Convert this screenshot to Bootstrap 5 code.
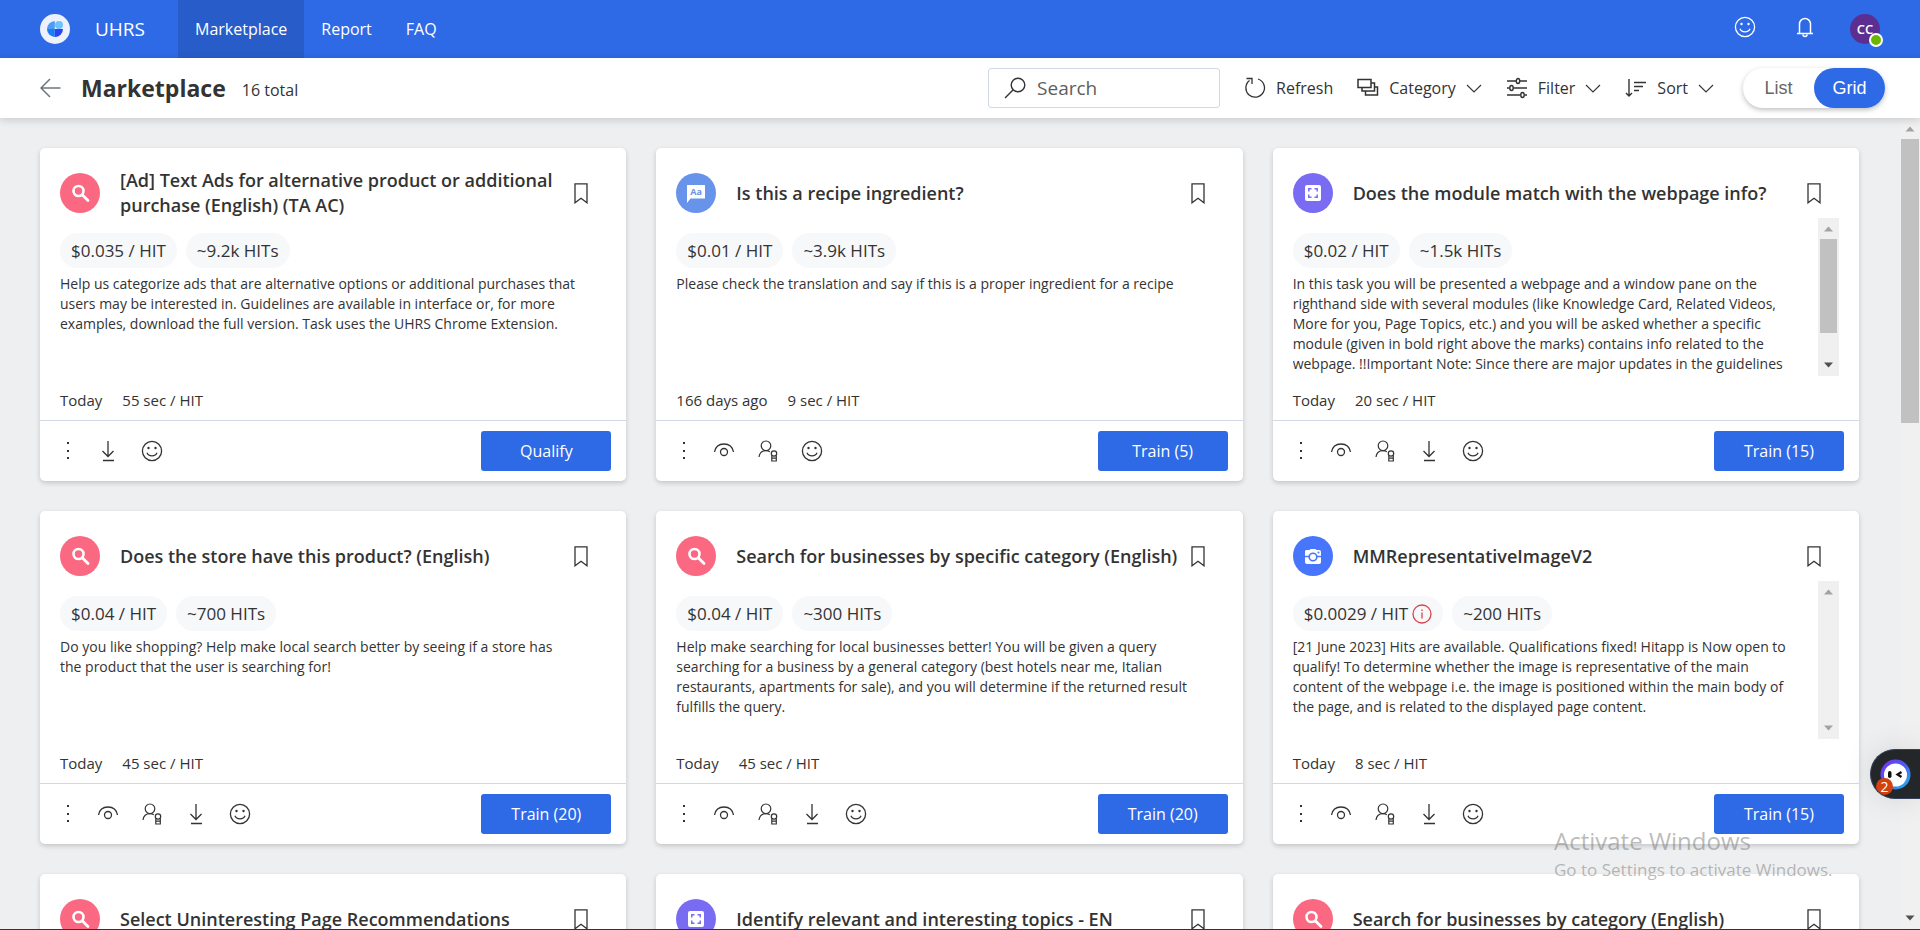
<!DOCTYPE html>
<html lang="en">
<head>
<meta charset="utf-8">
<meta name="viewport" content="width=device-width, initial-scale=1">
<title>UHRS Marketplace</title>
<link href="https://cdn.jsdelivr.net/npm/bootstrap@5.3.0/dist/css/bootstrap.min.css" rel="stylesheet">
<style>
  :root { --brand: #2e69e6; --ink: #333; --line: #d2d8e6; }
  body { font-family: "Open Sans", "Noto Sans", sans-serif; font-size: 17px; line-height: 24px; color: var(--ink); background: #eeeff1; height: 100vh; border-bottom: 1px solid #333; }
  svg { display: block; flex: none; fill: none; stroke: currentColor; }
  button { font: inherit; color: inherit; }
  .plain { background: none; border: 0; padding: 0; }

  .topbar { background: var(--brand); height: 58px; padding: 0 40px; color: #fff; }
  .topbar a { color: #fff; text-decoration: none; }
  .brand-name { font-size: 19px; gap: 25px; }
  .tabs { margin-left: 33px; font-size: 16px; }
  .tabs a { padding: 0 17px; display: flex; align-items: center; }
  .tabs a.active { background: #285cc9; }
  .bell { margin: 0 36px 0 40px; }
  .avatar { width: 30px; height: 30px; background: #5c2e91; font-size: 13px; font-weight: 600; line-height: 28px; }
  .presence { width: 14px; height: 14px; background: #6bb700; border: 2px solid #fff; right: -3px; bottom: -3px; }

  .subbar { height: 60px; padding: 0 35px 0 40px; background: #fff; box-shadow: 0 2px 8px rgba(0,0,0,.16); z-index: 2; font-size: 16px; }
  .subbar h1 { font-size: 23px; font-weight: 700; line-height: 32px; }
  .search-box { width: 232px; height: 40px; border: 1px solid var(--line); border-radius: 3px; padding: 0 15px; gap: 11px; }
  .search-box input { font-size: 19px; border: 0; outline: 0; min-width: 0; width: 100%; padding: 0; color: var(--ink); }
  .search-box input::placeholder { color: #605e5c; opacity: 1; }
  .tools { gap: 24px; margin: 0 29px 0 24px; }
  .tools button { gap: 10px; }
  .switch-pill { height: 40px; border-radius: 20px; box-shadow: 0 2px 5px rgba(0,0,0,.25); font-family: "Liberation Sans", sans-serif; font-size: 18px; color: #666; }
  .switch-pill button { width: 71px; border-radius: 20px; }
  .switch-pill .on { background: var(--brand); color: #fff; }

  .scroller { padding: 30px 41px 0 40px; overflow: hidden; }
  .tiles { --bs-gutter-x: 30px; --bs-gutter-y: 30px; }
  .card { --bs-card-border-width: 0; --bs-card-border-radius: 5px; height: 333px; box-shadow: 0 2px 5px rgba(0,0,0,.18); color: var(--ink); }
  .tile-head { height: 70px; padding: 20px 38px 0 20px; }
  .tile-head h2 { font-size: 18px; font-weight: 600; line-height: 25px; width: 448px; margin: 0 auto 0 20px; }
  .tile-head .row-c { height: 50px; }
  .disc { width: 40px; height: 40px; }
  .pink { background: #fb6881; } .sky { background: #6793ea; } .violet { background: #7a6cf2; } .royal { background: #4775fb; }
  .tile-body { height: 158px; padding: 0 20px; }
  .tile-text { padding: 15px 22px 0 0; overflow: hidden; font-size: 14px; line-height: 20px; }
  .tile-text:only-child { padding-right: 30px; }
  .chips { gap: 9px; }
  .chip { height: 35px; padding: 0 11px; background: #f7f8fa; font-size: 17px; }
  .tile-text p { margin: 6px 0 0; }
  .tile-meta { height: 44px; padding: 14px 20px 0; font-size: 15px; line-height: 20px; gap: 20px; }
  .tile-foot { height: 61px; border-top: 1px solid var(--line); padding: 0 15px 0 21px; gap: 22px; }
  .act { width: 130px; height: 40px; border-radius: 3px; background: var(--brand); border: 0; color: #fff; font-size: 16px; }

  .bar { background: #f0f0f0; width: 21px; padding: 0 2px; flex: none; }
  .bar-main { width: 20px; padding: 0 1px; }
  .bar i { display: block; background: #c1c1c1; }
  .bar svg { fill: #a3a3a3; stroke: none; width: 100%; height: 21px; }
  .bar svg.live { fill: #505050; }
  .thumb-s { height: 94px; }
  .thumb-l { height: 284px; }

  .helper { right: 0; top: 749px; width: 50px; height: 50px; background: #23272a; border: 1px solid #35405a; border-right: 0; border-radius: 25px 0 0 25px; box-shadow: 0 0 30px rgba(0,0,0,.1); z-index: 4; overflow: hidden; }
  .helper svg { margin: 9px 0 0 9px; }
  .helper .count { left: 5px; top: 28px; width: 17px; height: 17px; background: #d2410f; font-size: 14px; line-height: 17px; color: #fff; }
  .watermark { left: 1554px; bottom: 47px; color: rgba(120,120,120,.5); z-index: 3; pointer-events: none; }
  .watermark div { font-size: 24px; line-height: 34px; }
</style>
</head>
<body class="d-flex flex-column overflow-hidden position-relative">

<svg width="0" height="0" class="position-absolute">
  <symbol id="mag" viewBox="0 0 40 40"><circle cx="18.500" cy="18" r="5" stroke="#fff" stroke-width="2.600"/><path d="M22.500 22l5.500 5.500" stroke="#fff" stroke-width="2.800" stroke-linecap="round"/></symbol>
  <symbol id="mod" viewBox="0 0 40 40"><rect x="12" y="12" width="16" height="16" rx="2" fill="#fff" stroke="none"/><path d="M15.800 18.500v-2.700h2.700m3 0h2.700v2.700m0 3v2.700h-2.700m-3 0h-2.700v-2.700" stroke="#7a6cf2" stroke-width="1.500"/></symbol>
  <symbol id="cam" viewBox="0 0 40 40"><path d="M12 15a2 2 0 0 1 2-1h2.500l1-1h5l1 1H26a2 2 0 0 1 2 2v10a2 2 0 0 1-2 2H14a2 2 0 0 1-2-2z" fill="#fff" stroke="none"/><path d="M12 20.500h4m8 0h4" stroke="#4775fb" stroke-width="1.300"/><circle cx="20" cy="21" r="3.800" stroke="#4775fb" stroke-width="1.600"/><circle cx="25.500" cy="16.500" r="1" fill="#4775fb" stroke="none"/></symbol>
  <symbol id="mark-i" viewBox="0 0 14 21"><path d="M1 .8h12v19l-6-4.500-6 4.500z" stroke-width="1.300"/></symbol>
  <symbol id="dots" viewBox="0 0 14 22"><g fill="#333" stroke="none"><rect x="6" y="2" width="2" height="2"/><rect x="6" y="10" width="2" height="2"/><rect x="6" y="17" width="2" height="2"/></g></symbol>
  <symbol id="eye" viewBox="0 0 22 22"><path d="M1.500 12c1-5.500 5-8 9.500-8s8.500 2.500 9.500 8" stroke-width="1.300"/><circle cx="11" cy="12" r="3.500" stroke-width="1.300"/></symbol>
  <symbol id="person" viewBox="0 0 22 22"><g stroke-width="1.200"><circle cx="9" cy="5.800" r="4.800"/><path d="M2 17c.5-4 3-6.400 7-6.400 1.600 0 2.800.4 3.800 1.200"/><circle cx="17" cy="13.500" r="2.700"/><path d="M14.800 15.500v5.500h4.500v-5.500m-4.500 2.700h4.500"/></g></symbol>
  <symbol id="down" viewBox="0 0 22 22"><path d="M11 1v15M5.500 11l5.500 5.500 5.500-5.500M6 20.500h11" stroke-width="1.300"/></symbol>
  <symbol id="smile" viewBox="0 0 22 22"><circle cx="11" cy="11" r="9.600" stroke-width="1.300"/><path d="M6 12.800c1.500 4 8.500 4 10 0" stroke-width="1.300"/><g fill="currentColor" stroke="none"><circle cx="7.500" cy="8" r="1.200"/><circle cx="14.500" cy="8" r="1.200"/></g></symbol>
  <symbol id="chev" viewBox="0 0 16 16"><path d="M1 5l7 7 7-7" stroke-width="1.100"/></symbol>
  <symbol id="up" viewBox="0 0 17 21"><path d="M4 13.500l4.500-5 4.500 5z"/></symbol>
  <symbol id="dn" viewBox="0 0 17 21"><path d="M4 7.500l4.500 5 4.500-5z"/></symbol>
</svg>

<header class="topbar d-flex align-items-center flex-shrink-0">
  <a href="#" class="d-flex align-items-center brand-name">
    <svg width="30" height="30" viewBox="0 0 30 30"><g stroke="none"><circle cx="15" cy="15" r="15" fill="#ecf1fc"/><path d="M14.800 15H7a8 8 0 0 1 7.800-8z" fill="#4a9cf8"/><path d="M14.800 15v8A8 8 0 0 1 7 15z" fill="#1a7df5"/><path d="M14.800 15H23a8 8 0 0 1-8.200 8z" fill="#2a44f5"/><circle cx="19" cy="11" r="4" fill="#6cc4ff"/></g></svg>
    <span>UHRS</span>
  </a>
  <nav class="tabs d-flex align-self-stretch">
    <a href="#" class="active" aria-current="page">Marketplace</a>
    <a href="#">Report</a>
    <a href="#">FAQ</a>
  </nav>
  <div class="d-flex align-items-center ms-auto">
    <button class="plain pb-1" aria-label="Feedback"><svg width="22" height="22"><use href="#smile"/></svg></button>
    <button class="plain bell pb-1" aria-label="Notifications"><svg width="18" height="22" viewBox="0 0 18 22"><path d="M3.500 17.500V8a5.500 5.500 0 0 1 11 0v9.500M1 17.500h16M7 18.500a2 2 0 0 0 4 0" stroke-width="1.500"/></svg></button>
    <button class="plain avatar rounded-circle position-relative text-center" aria-label="Account">CC<span class="presence rounded-circle position-absolute"></span></button>
  </div>
</header>

<div class="subbar d-flex align-items-center flex-shrink-0 position-relative">
  <a href="#" class="text-secondary" aria-label="Back"><svg width="21" height="20" viewBox="0 0 21 20"><path d="M20.500 10H1M10 1L1 10l9 9" stroke-width="1.500"/></svg></a>
  <h1 class="mb-0 ms-3 ps-1">Marketplace</h1>
  <span class="ms-3 mt-1">16 total</span>
  <label class="search-box d-flex align-items-center ms-auto">
    <svg width="22" height="22" viewBox="0 0 22 22"><circle cx="14" cy="8" r="6.800" stroke-width="1.400"/><path d="M9.200 12.800L1 21" stroke-width="1.400"/></svg>
    <input type="text" placeholder="Search" aria-label="Search">
  </label>
  <div class="d-flex align-items-center tools">
    <button class="plain d-flex align-items-center"><svg width="22" height="22" viewBox="0 0 22 22"><path d="M14 2a9.300 9.300 0 1 1-8.500 1.500M2.500 1.500h5.500V7" stroke-width="1.300"/></svg><span>Refresh</span></button>
    <button class="plain d-flex align-items-center"><svg width="22" height="20" viewBox="0 0 22 20"><path d="M1 1.500h13v8H1zM14 5h3.500v8H5V9.500M17.500 9H20.500v8H8.500V13" stroke-width="1.500"/></svg><span>Category</span><svg width="16" height="16"><use href="#chev"/></svg></button>
    <button class="plain d-flex align-items-center"><svg width="22" height="22" viewBox="0 0 22 22"><g stroke-width="1.400"><path d="M1 4h9m4 0h7M1 11h2.500m4 0H21M1 18h13.500m4 0H21"/><ellipse cx="12" cy="4" rx="1.700" ry="2.500"/><ellipse cx="5.500" cy="11" rx="1.700" ry="2.500"/><ellipse cx="16.500" cy="18" rx="1.700" ry="2.500"/></g></svg><span>Filter</span><svg width="16" height="16"><use href="#chev"/></svg></button>
    <button class="plain d-flex align-items-center"><svg width="22" height="20" viewBox="0 0 22 20"><path d="M4 1v17M1 15l3 3 3-3M9 4.500h12M9 8.500h9M9 12.500h5" stroke-width="1.400"/></svg><span>Sort</span><svg width="16" height="16"><use href="#chev"/></svg></button>
  </div>
  <div class="switch-pill d-flex" role="group" aria-label="Layout">
    <button class="plain">List</button>
    <button class="plain on">Grid</button>
  </div>
</div>

<div class="d-flex flex-grow-1 overflow-hidden">
<main class="scroller flex-grow-1">
  <div class="row row-cols-3 tiles">

    <div class="col"><article class="card">
      <div class="tile-head"><div class="row-c d-flex align-items-center"><svg class="disc pink rounded-circle"><use href="#mag"/></svg><h2>[Ad] Text Ads for alternative product or additional purchase (English) (TA AC)</h2><button class="plain" aria-label="Bookmark"><svg width="14" height="21"><use href="#mark-i"/></svg></button></div></div>
      <div class="tile-body d-flex"><div class="tile-text"><div class="d-flex chips"><span class="chip rounded-pill d-flex align-items-center">$0.035 / HIT</span><span class="chip rounded-pill d-flex align-items-center">~9.2k HITs</span></div>
        <p>Help us categorize ads that are alternative options or additional purchases that users may be interested in. Guidelines are available in interface or, for more examples, download the full version. Task uses the UHRS Chrome Extension.</p></div></div>
      <div class="tile-meta d-flex"><span>Today</span><span>55 sec / HIT</span></div>
      <div class="tile-foot d-flex align-items-center"><button class="plain" aria-label="More"><svg width="14" height="22"><use href="#dots"/></svg></button><button class="plain" aria-label="Download"><svg width="22" height="22"><use href="#down"/></svg></button><button class="plain" aria-label="Feedback"><svg width="22" height="22"><use href="#smile"/></svg></button><button class="act ms-auto">Qualify</button></div>
    </article></div>

    <div class="col"><article class="card">
      <div class="tile-head"><div class="row-c d-flex align-items-center"><svg class="disc sky rounded-circle" viewBox="0 0 40 40"><path d="M11 12h18v13.500H14.500L11 30z" fill="#fff" stroke="none"/><text x="20" y="22" text-anchor="middle" font-size="9" font-weight="700" fill="#6793ea" stroke="none">Aa</text></svg><h2>Is this a recipe ingredient?</h2><button class="plain" aria-label="Bookmark"><svg width="14" height="21"><use href="#mark-i"/></svg></button></div></div>
      <div class="tile-body d-flex"><div class="tile-text"><div class="d-flex chips"><span class="chip rounded-pill d-flex align-items-center">$0.01 / HIT</span><span class="chip rounded-pill d-flex align-items-center">~3.9k HITs</span></div>
        <p>Please check the translation and say if this is a proper ingredient for a recipe</p></div></div>
      <div class="tile-meta d-flex"><span>166 days ago</span><span>9 sec / HIT</span></div>
      <div class="tile-foot d-flex align-items-center"><button class="plain" aria-label="More"><svg width="14" height="22"><use href="#dots"/></svg></button><button class="plain" aria-label="Preview"><svg width="22" height="22"><use href="#eye"/></svg></button><button class="plain" aria-label="Qualification"><svg width="22" height="22"><use href="#person"/></svg></button><button class="plain" aria-label="Feedback"><svg width="22" height="22"><use href="#smile"/></svg></button><button class="act ms-auto">Train (5)</button></div>
    </article></div>

    <div class="col"><article class="card">
      <div class="tile-head"><div class="row-c d-flex align-items-center"><svg class="disc violet rounded-circle"><use href="#mod"/></svg><h2>Does the module match with the webpage info?</h2><button class="plain" aria-label="Bookmark"><svg width="14" height="21"><use href="#mark-i"/></svg></button></div></div>
      <div class="tile-body d-flex"><div class="tile-text flex-grow-1"><div class="d-flex chips"><span class="chip rounded-pill d-flex align-items-center">$0.02 / HIT</span><span class="chip rounded-pill d-flex align-items-center">~1.5k HITs</span></div>
        <p>In this task you will be presented a webpage and a window pane on the righthand side with several modules (like Knowledge Card, Related Videos, More for you, Page Topics, etc.) and you will be asked whether a specific module (given in bold right above the marks) contains info related to the webpage. !!Important Note: Since there are major updates in the guidelines</p></div>
        <div class="bar d-flex flex-column"><svg><use href="#up"/></svg><i class="thumb-s"></i><svg class="live mt-auto"><use href="#dn"/></svg></div></div>
      <div class="tile-meta d-flex"><span>Today</span><span>20 sec / HIT</span></div>
      <div class="tile-foot d-flex align-items-center"><button class="plain" aria-label="More"><svg width="14" height="22"><use href="#dots"/></svg></button><button class="plain" aria-label="Preview"><svg width="22" height="22"><use href="#eye"/></svg></button><button class="plain" aria-label="Qualification"><svg width="22" height="22"><use href="#person"/></svg></button><button class="plain" aria-label="Download"><svg width="22" height="22"><use href="#down"/></svg></button><button class="plain" aria-label="Feedback"><svg width="22" height="22"><use href="#smile"/></svg></button><button class="act ms-auto">Train (15)</button></div>
    </article></div>

    <div class="col"><article class="card">
      <div class="tile-head"><div class="row-c d-flex align-items-center"><svg class="disc pink rounded-circle"><use href="#mag"/></svg><h2>Does the store have this product? (English)</h2><button class="plain" aria-label="Bookmark"><svg width="14" height="21"><use href="#mark-i"/></svg></button></div></div>
      <div class="tile-body d-flex"><div class="tile-text"><div class="d-flex chips"><span class="chip rounded-pill d-flex align-items-center">$0.04 / HIT</span><span class="chip rounded-pill d-flex align-items-center">~700 HITs</span></div>
        <p>Do you like shopping? Help make local search better by seeing if a store has the&nbsp;product that the user is searching for!</p></div></div>
      <div class="tile-meta d-flex"><span>Today</span><span>45 sec / HIT</span></div>
      <div class="tile-foot d-flex align-items-center"><button class="plain" aria-label="More"><svg width="14" height="22"><use href="#dots"/></svg></button><button class="plain" aria-label="Preview"><svg width="22" height="22"><use href="#eye"/></svg></button><button class="plain" aria-label="Qualification"><svg width="22" height="22"><use href="#person"/></svg></button><button class="plain" aria-label="Download"><svg width="22" height="22"><use href="#down"/></svg></button><button class="plain" aria-label="Feedback"><svg width="22" height="22"><use href="#smile"/></svg></button><button class="act ms-auto">Train (20)</button></div>
    </article></div>

    <div class="col"><article class="card">
      <div class="tile-head"><div class="row-c d-flex align-items-center"><svg class="disc pink rounded-circle"><use href="#mag"/></svg><h2>Search for businesses by specific category (English)</h2><button class="plain" aria-label="Bookmark"><svg width="14" height="21"><use href="#mark-i"/></svg></button></div></div>
      <div class="tile-body d-flex"><div class="tile-text"><div class="d-flex chips"><span class="chip rounded-pill d-flex align-items-center">$0.04 / HIT</span><span class="chip rounded-pill d-flex align-items-center">~300 HITs</span></div>
        <p>Help make searching for local businesses better! You will be given a query searching for a business by a general category (best hotels near me, Italian restaurants, apartments for sale), and you will determine if the returned result fulfills the query.</p></div></div>
      <div class="tile-meta d-flex"><span>Today</span><span>45 sec / HIT</span></div>
      <div class="tile-foot d-flex align-items-center"><button class="plain" aria-label="More"><svg width="14" height="22"><use href="#dots"/></svg></button><button class="plain" aria-label="Preview"><svg width="22" height="22"><use href="#eye"/></svg></button><button class="plain" aria-label="Qualification"><svg width="22" height="22"><use href="#person"/></svg></button><button class="plain" aria-label="Download"><svg width="22" height="22"><use href="#down"/></svg></button><button class="plain" aria-label="Feedback"><svg width="22" height="22"><use href="#smile"/></svg></button><button class="act ms-auto">Train (20)</button></div>
    </article></div>

    <div class="col"><article class="card">
      <div class="tile-head"><div class="row-c d-flex align-items-center"><svg class="disc royal rounded-circle"><use href="#cam"/></svg><h2>MMRepresentativeImageV2</h2><button class="plain" aria-label="Bookmark"><svg width="14" height="21"><use href="#mark-i"/></svg></button></div></div>
      <div class="tile-body d-flex"><div class="tile-text flex-grow-1"><div class="d-flex chips"><span class="chip rounded-pill d-flex align-items-center">$0.0029 / HIT<svg width="20" height="20" viewBox="0 0 20 20" class="ms-1"><g stroke="#d9414f" stroke-width="1.300"><circle cx="10" cy="10" r="9"/><path d="M10 8.500V14.500M10 5.500v1.500"/></g></svg></span><span class="chip rounded-pill d-flex align-items-center">~200 HITs</span></div>
        <p>[21 June 2023] Hits are available. Qualifications fixed! Hitapp is Now open to qualify! To determine whether the image is representative of the main content of the webpage i.e. the image is positioned within the main body of the page, and is related to the displayed page content.</p></div>
        <div class="bar d-flex flex-column"><svg><use href="#up"/></svg><svg class="mt-auto"><use href="#dn"/></svg></div></div>
      <div class="tile-meta d-flex"><span>Today</span><span>8 sec / HIT</span></div>
      <div class="tile-foot d-flex align-items-center"><button class="plain" aria-label="More"><svg width="14" height="22"><use href="#dots"/></svg></button><button class="plain" aria-label="Preview"><svg width="22" height="22"><use href="#eye"/></svg></button><button class="plain" aria-label="Qualification"><svg width="22" height="22"><use href="#person"/></svg></button><button class="plain" aria-label="Download"><svg width="22" height="22"><use href="#down"/></svg></button><button class="plain" aria-label="Feedback"><svg width="22" height="22"><use href="#smile"/></svg></button><button class="act ms-auto">Train (15)</button></div>
    </article></div>

    <div class="col"><article class="card">
      <div class="tile-head"><div class="row-c d-flex align-items-center"><svg class="disc pink rounded-circle"><use href="#mag"/></svg><h2>Select Uninteresting Page Recommendations</h2><button class="plain" aria-label="Bookmark"><svg width="14" height="21"><use href="#mark-i"/></svg></button></div></div>
    </article></div>
    <div class="col"><article class="card">
      <div class="tile-head"><div class="row-c d-flex align-items-center"><svg class="disc violet rounded-circle"><use href="#mod"/></svg><h2>Identify relevant and interesting topics - EN</h2><button class="plain" aria-label="Bookmark"><svg width="14" height="21"><use href="#mark-i"/></svg></button></div></div>
    </article></div>
    <div class="col"><article class="card">
      <div class="tile-head"><div class="row-c d-flex align-items-center"><svg class="disc pink rounded-circle"><use href="#mag"/></svg><h2>Search for businesses by category (English)</h2><button class="plain" aria-label="Bookmark"><svg width="14" height="21"><use href="#mark-i"/></svg></button></div></div>
    </article></div>
  </div>
</main>
<div class="bar bar-main d-flex flex-column"><svg><use href="#up"/></svg><i class="thumb-l"></i><svg class="live mt-auto"><use href="#dn"/></svg></div>
</div>

<aside class="helper position-absolute">
  <svg width="31" height="31" viewBox="0 0 31 31"><defs><linearGradient id="ring" x1="0" y1="0" x2="1" y2="1"><stop offset="0" stop-color="#7a2cf5"/><stop offset=".5" stop-color="#4a5cf5"/><stop offset="1" stop-color="#19c3e6"/></linearGradient></defs><g stroke="none"><circle cx="15.500" cy="15.500" r="15" fill="url(#ring)"/><circle cx="15.500" cy="16" r="11.500" fill="#fff"/><rect x="8" y="12" width="3.500" height="7" rx="1.700" fill="#111"/></g><path d="M21.500 13l-4 2.500 4 2.500" stroke="#111" stroke-width="2.200"/></svg>
  <span class="count position-absolute rounded-circle text-center">2</span>
</aside>
<div class="watermark position-absolute"><div>Activate Windows</div>Go to Settings to activate Windows.</div>
<script src="https://cdn.jsdelivr.net/npm/bootstrap@5.3.0/dist/js/bootstrap.bundle.min.js"></script>
</body>
</html>
